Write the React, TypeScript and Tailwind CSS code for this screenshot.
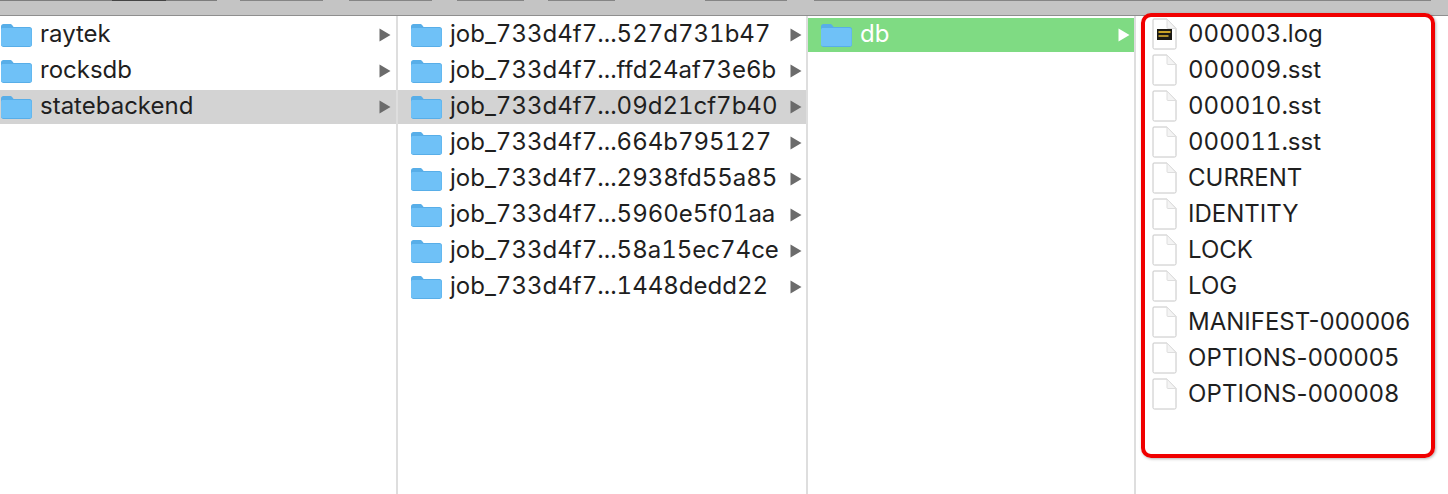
const col1 = [
  { name: 'raytek' },
  { name: 'rocksdb' },
  { name: 'statebackend', sel: true },
]
const col2 = [
  { name: 'job_733d4f7...527d731b47' },
  { name: 'job_733d4f7...ffd24af73e6b' },
  { name: 'job_733d4f7...09d21cf7b40', sel: true },
  { name: 'job_733d4f7...664b795127' },
  { name: 'job_733d4f7...2938fd55a85' },
  { name: 'job_733d4f7...5960e5f01aa' },
  { name: 'job_733d4f7...58a15ec74ce' },
  { name: 'job_733d4f7...1448dedd22' },
]
const files = [
  { name: '000009.sst', cls: 'tabular-nums' },
  { name: '000010.sst', cls: 'tabular-nums' },
  { name: '000011.sst', cls: 'tabular-nums' },
  { name: 'CURRENT', cls: '' },
  { name: 'IDENTITY', cls: '' },
  { name: 'LOCK', cls: '' },
  { name: 'LOG', cls: '' },
  { name: 'MANIFEST-000006', cls: '' },
  { name: 'OPTIONS-000005', cls: 'tracking-[0.15px]' },
  { name: 'OPTIONS-000008', cls: 'tracking-[0.15px]' },
]
// leftovers of the toolbar buttons along the top edge
const topBits = [
  { w: 'w-[112px]', ml: 'ml-0', c: 'bg-[#7d7d7d]' },
  { w: 'w-[54px]', ml: 'ml-0', c: 'bg-[#444444]' },
  { w: 'w-[51px]', ml: 'ml-0', c: 'bg-[#7d7d7d]' },
  { w: 'w-[83px]', ml: 'ml-[23px]', c: 'bg-[#858585]' },
  { w: 'w-[83px]', ml: 'ml-[26px]', c: 'bg-[#858585]' },
  { w: 'w-[67px]', ml: 'ml-[25px]', c: 'bg-[#858585]' },
  { w: 'w-[67px]', ml: 'ml-[24px]', c: 'bg-[#858585]' },
  { w: 'w-[82px]', ml: 'ml-[90px]', c: 'bg-[#858585]' },
  { w: 'w-[617px]', ml: 'ml-[27px]', c: 'bg-[#858585]' },
]

function Folder() {
  return (
    <svg width="32" height="26" viewBox="0 0 32 26" className="shrink-0">
      <path d="M1 4.500C1 3 2 2 3.500 2H10c1 0 1.600.4 2.300 1.200L13.600 5H29.500C31 5 32 6 32 7.500V22.500C32 24 31 25 29.500 25H3.500C2 25 1 24 1 22.500Z" fill="#58aee8" />
      <path d="M1 7.500C1 6.500 2 6 3 6H29.500C31 6 31.500 7 31.500 8V22.500C31.500 23.500 31 24 29.500 24H3.500C2 24 1 23.500 1 22.500Z" fill="#6fc1f7" />
    </svg>
  )
}

function Arrow({ white }: { white?: boolean }) {
  return (
    <svg width="12" height="14" viewBox="0 0 12 14" className="shrink-0">
      <path d="M0.500 0.500L11.500 7L0.500 13.500Z" fill={white ? '#ffffff' : '#6b6b6b'} />
    </svg>
  )
}

function FileIcon({ log }: { log?: boolean }) {
  return (
    <svg width="25" height="32" viewBox="0 0 25 32" className="shrink-0 mb-[3px]">
      <path d="M1 2C1 1.200 1.400 1 2 1H15L24 10.500V29.500C24 30.400 23.500 31 22.500 31H2.500C1.500 31 1 30.400 1 29.500Z" fill="#fff" stroke="#c6c6c6" />
      <path d="M15 1V9.500C15 10.200 15.300 10.500 16 10.500H24Z" fill="#f4f4f4" stroke="#dedede" />
      {log && <rect x="5" y="11" width="15" height="11" fill="#1c1a14" />}
      {log && <rect x="6.500" y="13" width="12" height="2" fill="#c9a227" />}
      {log && <rect x="6.500" y="17" width="10" height="2" fill="#b08f2a" />}
    </svg>
  )
}

function Row({ name, sel, pad }: { name: string; sel?: boolean; pad: string }) {
  return (
    <div className={`flex items-center h-[34px] mb-[2px] ${pad} ${sel ? 'bg-[#d3d3d3]' : ''}`}>
      <Folder />
      <span className="ml-[8px] pb-[2px] flex-1 whitespace-nowrap text-[24px] text-[#1f1f1f] tabular-nums">{name}</span>
      <Arrow />
    </div>
  )
}

export default function App() {
  return (
    <div className="relative w-[1448px] h-[494px] overflow-hidden bg-white font-['Inter','Liberation_Sans',sans-serif]">
      <div className="h-[16px] bg-[#c4c4c4] border-b border-b-[#8f8f8f] flex items-start">
        {topBits.map((b, i) => <div key={i} className={`h-[1px] ${b.w} ${b.ml} ${b.c}`}></div>)}
      </div>
      <div className="flex h-[478px]">
        <div className="w-[398px] pt-[2px] border-r-2 border-r-[#dedede]">
          {col1.map(r => <Row key={r.name} {...r} pad="pr-[5px]" />)}
        </div>
        <div className="w-[410px] pt-[2px] border-r-2 border-r-[#dedede]">
          {col2.map(r => <Row key={r.name} {...r} pad="pl-[12px] pr-[4px]" />)}
        </div>
        <div className="w-[328px] pt-[2px] border-r-2 border-r-[#dedede]">
          <div className="flex items-center h-[34px] pl-[12px] pr-[4px] bg-[#7fdb83]">
            <Folder />
            <span className="ml-[8px] pb-[2px] flex-1 text-[24px] text-white">db</span>
            <Arrow white />
          </div>
        </div>
        <div className="flex-1 pl-[16px] pt-[2px]">
          <div className="flex items-center h-[34px] mb-[2px]">
            <FileIcon log />
            <span className="ml-[11px] pb-[2px] whitespace-nowrap text-[24px] text-[#1f1f1f] tabular-nums">000003.log</span>
          </div>
          {files.map(f => (
            <div key={f.name} className="flex items-center h-[34px] mb-[2px]">
              <FileIcon />
              <span className={`ml-[11px] pb-[2px] whitespace-nowrap text-[24px] text-[#1f1f1f] ${f.cls}`}>{f.name}</span>
            </div>
          ))}
        </div>
      </div>
      <div className="absolute left-[1141px] top-[13px] w-[294px] h-[445px] border-[4px] border-[#f00000] rounded-[10px] shadow-[1px_1px_3px_rgba(0,0,0,0.3)]"></div>
    </div>
  )
}
